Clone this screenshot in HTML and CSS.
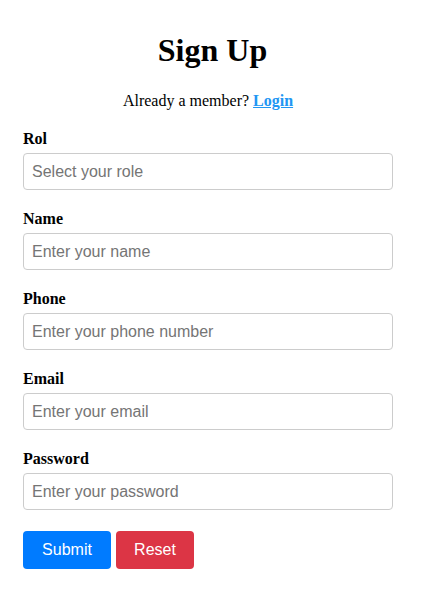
FILE: index.html
```html
<!DOCTYPE html>
<html>
<head>
<meta charset="utf-8">
<link rel="stylesheet" href="styles.css">
</head>
<body>
<div class="container">
  <h1 class="title">Sign Up</h1>
  <p class="subtitle">Already a member? <a href="#" class="login">Login</a></p>
  <form class="form">
    <div class="field">
      <label class="label">Rol</label>
      <input class="input" type="text" placeholder="Select your role">
    </div>
    <div class="field">
      <label class="label">Name</label>
      <input class="input" type="text" placeholder="Enter your name">
    </div>
    <div class="field">
      <label class="label">Phone</label>
      <input class="input" type="text" placeholder="Enter your phone number">
    </div>
    <div class="field">
      <label class="label">Email</label>
      <input class="input" type="text" placeholder="Enter your email">
    </div>
    <div class="field">
      <label class="label">Password</label>
      <input class="input" type="password" placeholder="Enter your password">
    </div>
    <div class="actions">
      <button type="button" class="btn btn-submit">Submit</button>
      <button type="button" class="btn btn-reset">Reset</button>
    </div>
  </form>
</div>
</body>
</html>
```
FILE: styles.css
```css
html, body {
  margin: 0;
  padding: 0;
  background: #fff;
}
body {
  font-family: "Liberation Serif", "Times New Roman", serif;
  color: #000;
}
.container {
  padding: 0 23px;
  width: 370px;
}
.title {
  margin: 0;
  padding-top: 32px;
  font-size: 32px;
  font-weight: bold;
  text-align: center;
  line-height: 37px;
  width: 379px;
}
.subtitle {
  margin: 23px 0 0;
  font-size: 16px;
  line-height: 18px;
  text-align: center;
  width: 370px;
}
.login {
  color: #2196f3;
  font-weight: bold;
  text-decoration: underline;
}
.form {
  display: flex;
  flex-direction: column;
  margin-top: 20px;
}
.field {
  display: flex;
  flex-direction: column;
  margin-bottom: 20px;
}
.label {
  font-size: 16px;
  font-weight: bold;
  line-height: 18px;
  margin-bottom: 5px;
}
.input {
  box-sizing: border-box;
  width: 370px;
  height: 37px;
  border: 1px solid #ccc;
  border-radius: 4px;
  padding: 0 8px;
  font-family: "Liberation Sans", Arial, sans-serif;
  font-size: 16px;
  color: #333;
  outline: none;
}
.input::placeholder {
  color: #757575;
}
.actions {
  display: flex;
  gap: 5px;
  margin-top: 1px;
}
.btn {
  height: 38px;
  border: none;
  border-radius: 4px;
  color: #fff;
  font-family: "Liberation Sans", Arial, sans-serif;
  font-size: 16px;
  padding: 0;
  cursor: pointer;
}
.btn-submit {
  background: #007bff;
  width: 88px;
}
.btn-reset {
  background: #dc3545;
  width: 78px;
}
```
